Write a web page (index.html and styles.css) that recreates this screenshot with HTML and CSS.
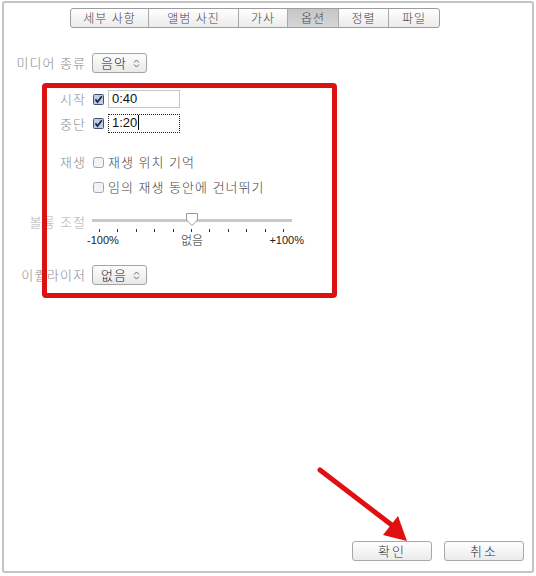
FILE: index.html
```html
<!DOCTYPE html>
<html lang="ko">
<head>
    <meta charset="UTF-8">
    <title>옵션</title>
    <link rel="stylesheet" href="styles.css">
</head>
<body>
    <div class="window">
        <nav class="tabs">
            <span class="tab">세부 사항</span>
            <span class="tab">앨범 사진</span>
            <span class="tab">가사</span>
            <span class="tab active">옵션</span>
            <span class="tab">정렬</span>
            <span class="tab">파일</span>
        </nav>

        <div class="form">
            <div class="row row-media">
                <span class="label">미디어 종류</span>
                <div class="select">
                    <span>음악</span>
                    <svg class="updown" width="7" height="11" viewBox="0 0 7 11"><path d="M1 4.5 L3.5 2 L6 4.5 M1 6.5 L3.5 9 L6 6.5" fill="none" stroke="#666" stroke-width="1"/></svg>
                </div>
            </div>

            <div class="row row-start">
                <span class="label">시작</span>
                <div class="inline">
                    <svg class="box" width="11" height="11" viewBox="0 0 11 11"><rect x="0.5" y="0.5" width="10" height="10" rx="1" fill="#bccde4" stroke="#44546e"/><path d="M2.4 5.4 L4.5 8 L8.8 2.3" fill="none" stroke="#1b2b4b" stroke-width="1.8"/></svg>
                    <div class="field">0:40</div>
                </div>
            </div>

            <div class="row row-stop">
                <span class="label">중단</span>
                <div class="inline">
                    <svg class="box" width="11" height="11" viewBox="0 0 11 11"><rect x="0.5" y="0.5" width="10" height="10" rx="1" fill="#bccde4" stroke="#44546e"/><path d="M2.4 5.4 L4.5 8 L8.8 2.3" fill="none" stroke="#1b2b4b" stroke-width="1.8"/></svg>
                    <div class="field focused">1:20<span class="caret"></span></div>
                </div>
            </div>

            <div class="row row-play">
                <span class="label">재생</span>
                <div class="inline">
                    <svg class="box" width="11" height="11" viewBox="0 0 11 11"><rect x="0.5" y="0.5" width="10" height="10" rx="2" fill="#f3f3f3" stroke="#a6a6a6"/></svg>
                    <span class="option">재생 위치 기억</span>
                </div>
            </div>

            <div class="row row-shuffle">
                <span class="label"></span>
                <div class="inline">
                    <svg class="box" width="11" height="11" viewBox="0 0 11 11"><rect x="0.5" y="0.5" width="10" height="10" rx="2" fill="#f3f3f3" stroke="#a6a6a6"/></svg>
                    <span class="option">임의 재생 동안에 건너뛰기</span>
                </div>
            </div>

            <div class="row row-volume">
                <span class="label light">볼륨 조절</span>
                <div class="slider">
                    <div class="track"></div>
                    <svg class="thumb" width="14" height="15" viewBox="0 0 14 15"><path d="M1.5 1.5 H12.5 V8 L7 13.5 L1.5 8 Z" fill="#fff" stroke="#9a9a9a"/></svg>
                    <div class="ticks">
                        <i></i><i></i><i></i><i></i><i></i><i></i><i></i><i></i><i></i><i></i><i></i>
                    </div>
                    <div class="scale">
                        <span class="min">-100%</span>
                        <span class="mid">없음</span>
                        <span class="max">+100%</span>
                    </div>
                </div>
            </div>

            <div class="row row-eq">
                <span class="label">이퀄라이저</span>
                <div class="select">
                    <span>없음</span>
                    <svg class="updown" width="7" height="11" viewBox="0 0 7 11"><path d="M1 4.5 L3.5 2 L6 4.5 M1 6.5 L3.5 9 L6 6.5" fill="none" stroke="#666" stroke-width="1"/></svg>
                </div>
            </div>
        </div>

        <div class="buttons">
            <button>확인</button>
            <button>취소</button>
        </div>
    </div>

    <!-- annotation drawn over the dialog -->
    <div class="highlight"></div>
    <svg class="arrow" width="536" height="576" viewBox="0 0 536 576">
        <path d="M320 470 L393 526" stroke="#e01010" stroke-width="5" stroke-linecap="round"/>
        <path d="M407 541 L383 535 L398 516 Z" fill="#e01010"/>
    </svg>
</body>
</html>
```

FILE: styles.css
```css
* {
    box-sizing: border-box;
    margin: 0;
    padding: 0;
}

body {
    font-family: "Noto Sans CJK KR", "Liberation Sans", sans-serif;
    font-size: 13px;
    font-weight: 300;
    color: #333;
    background: #fff;
}

.window {
    width: 532px;
    height: 572px;
    margin: 1px 0 0 2px;
    border: 2px solid #c4c4c4;
    border-radius: 3px;
    display: flex;
    flex-direction: column;
}

/* tab bar */
.tabs {
    display: grid;
    grid-template-columns: 77px 90px 49px 51px 50px 51px;
    width: 370px;
    height: 20px;
    margin: 5px 0 0 66px;
    border: 1px solid #9c9c9c;
    border-radius: 3px;
    overflow: hidden;
    background: linear-gradient(#ffffff, #ebebeb);
}

.tab {
    font-size: 12px;
    line-height: 18px;
    letter-spacing: 1px;
    text-align: center;
    color: #444;
    border-left: 1px solid #a9a9a9;
}

.tab:first-child {
    border-left: none;
}

.tab.active {
    background: linear-gradient(#c6c6c6, #d6d6d6);
}

/* form rows */
.form {
    display: flex;
    flex-direction: column;
}

.row {
    display: grid;
    grid-template-columns: 81px auto;
    column-gap: 7px;
    align-items: center;
    height: 18px;
}

.label {
    text-align: right;
    color: #8a8a8a;
    line-height: 18px;
    letter-spacing: 1px;
    margin-right: -1px;
    white-space: nowrap;
}

.label.light {
    color: #adadad;
}

.row-media { margin-top: 25px; height: 20px; }
.row-start { margin-top: 17px; }
.row-stop { margin-top: 6px; }
.row-play { margin-top: 21px; }
.row-shuffle { margin-top: 7px; }
.row-volume { margin-top: 15px; height: 36px; align-items: start; }
.row-volume .label { margin-top: 2px; }
.row-eq { margin-top: 18px; height: 20px; }

.inline {
    display: flex;
    align-items: center;
    gap: 4px;
    padding-left: 1px;
}

.box {
    display: block;
}

.option {
    color: #444;
    line-height: 18px;
    letter-spacing: 1px;
}

.select {
    display: flex;
    align-items: center;
    justify-content: space-between;
    width: 55px;
    height: 20px;
    padding: 0 6px 0 8px;
    border: 1px solid #a4a4a4;
    border-radius: 3px;
    background: linear-gradient(#fdfdfd, #e9e9e9);
    color: #222;
    line-height: 18px;
    letter-spacing: 1px;
}

.field {
    width: 72px;
    height: 18px;
    padding-left: 3px;
    border: 1px solid #c6c6c6;
    font-family: "Liberation Sans", sans-serif;
    font-weight: 400;
    font-size: 13px;
    line-height: 16px;
    color: #111;
}

.field.focused {
    height: 19px;
    border: 1px dotted #222;
}

.caret {
    display: inline-block;
    width: 1px;
    height: 15px;
    margin-left: 1px;
    vertical-align: -3px;
    background: #000;
}

/* volume slider */
.slider {
    position: relative;
    width: 200px;
    height: 36px;
}

.track {
    margin-top: 8px;
    height: 3px;
    background: #c9c9c9;
}

.thumb {
    position: absolute;
    left: 93px;
    top: 1px;
}

.ticks {
    display: flex;
    justify-content: space-between;
    margin-top: 7px;
    padding: 0 8px 0 7px;
}

.ticks i {
    width: 1px;
    height: 3px;
    background: #333;
}

.scale {
    display: grid;
    grid-template-columns: 1fr auto 1fr;
    width: 210px;
    margin: 1px 0 0 -5px;
    font-size: 11px;
    line-height: 14px;
    color: #222;
}

.scale .min,
.scale .max {
    font-family: "Liberation Sans", sans-serif;
    font-weight: 400;
}

.scale .max {
    justify-self: end;
    margin-right: -7px;
}

.scale .mid {
    font-size: 12px;
}

/* bottom buttons */
.buttons {
    display: flex;
    justify-content: flex-end;
    gap: 12px;
    margin-top: auto;
    padding: 0 8px 10px 0;
}

button {
    width: 80px;
    height: 20px;
    border: 1px solid #a8a8a8;
    border-radius: 3px;
    background: linear-gradient(#ffffff, #ebebeb);
    font-family: "Noto Sans CJK KR", sans-serif;
    font-weight: 300;
    font-size: 13px;
    line-height: 18px;
    letter-spacing: 2px;
    color: #333;
}

/* red annotation */
.highlight {
    position: absolute;
    left: 42px;
    top: 83px;
    width: 295px;
    height: 215px;
    border: 5px solid #dc1212;
    border-radius: 4px;
}

.arrow {
    position: absolute;
    left: 0;
    top: 0;
    pointer-events: none;
}
```
